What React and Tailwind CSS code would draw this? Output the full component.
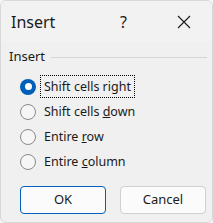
import React from "react";

function Radio({ checked }) {
  if (checked) {
    return (
      <span className="w-[16px] h-[16px] rounded-full bg-[#005fb8] flex items-center justify-center shrink-0">
        <span className="w-[7px] h-[7px] rounded-full bg-white" />
      </span>
    );
  }
  return <span className="w-[16px] h-[16px] rounded-full border border-[#8a8a8a] bg-[#f6f6f6] shrink-0" />;
}

function Row({ checked, children, focus }) {
  return (
    <div className="flex items-center h-[25px] pl-[19px]">
      <Radio checked={checked} />
      <span
        className={
          "ml-[6px] px-[2px] leading-[19px] text-[12.5px] text-[#1a1a1a] " +
          (focus ? "outline-1 outline-dotted outline-black outline-offset-[1px]" : "")
        }
      >
        {children}
      </span>
    </div>
  );
}

export default function App() {
  return (
    <div className="w-[213px] h-[223px] bg-[#f7f7f7] font-['Segoe_UI','Noto_Sans',sans-serif]">
      <div className="w-[213px] h-[223px] bg-[#f0f0f0] rounded-[6px] border border-[#d8d8d8] overflow-hidden flex flex-col">
        <div className="h-[41px] flex items-center bg-[#f2f2f2] relative">
          <span className="ml-[10px] text-[16px] text-[#1a1a1a]">Insert</span>
          <span className="absolute left-[119px] top-[9px] text-[16px] text-[#1a1a1a]">?</span>
          <svg className="absolute left-[176px] top-[14px]" width="14" height="14" viewBox="0 0 14 14">
            <path d="M1 1 L13 13 M13 1 L1 13" stroke="#1a1a1a" strokeWidth="1.1" />
          </svg>
        </div>
        <div className="flex items-center mt-[6px] h-[18px] pl-[8px] pr-[5px]">
          <span className="text-[13px] text-[#1a1a1a]">Insert</span>
          <span className="flex-1 h-px bg-[#d5d5d5] ml-[6px]" />
        </div>
        <div className="mt-[8px] flex flex-col">
          <Row checked focus>Shift cells ri<u>g</u>ht</Row>
          <Row>Shift cells <u>d</u>own</Row>
          <Row>Entire <u>r</u>ow</Row>
          <Row>Entire <u>c</u>olumn</Row>
        </div>
        <div className="flex gap-[14px] pl-[19px] mt-[12px]">
          <button className="w-[86px] h-[28px] rounded-[4px] border border-[#005fb8] bg-[#fbfbfb] text-[13px] text-[#1a1a1a]">OK</button>
          <button className="w-[86px] h-[28px] rounded-[4px] border border-[#d0d0d0] bg-[#fbfbfb] text-[13px] text-[#1a1a1a]">Cancel</button>
        </div>
      </div>
    </div>
  );
}
